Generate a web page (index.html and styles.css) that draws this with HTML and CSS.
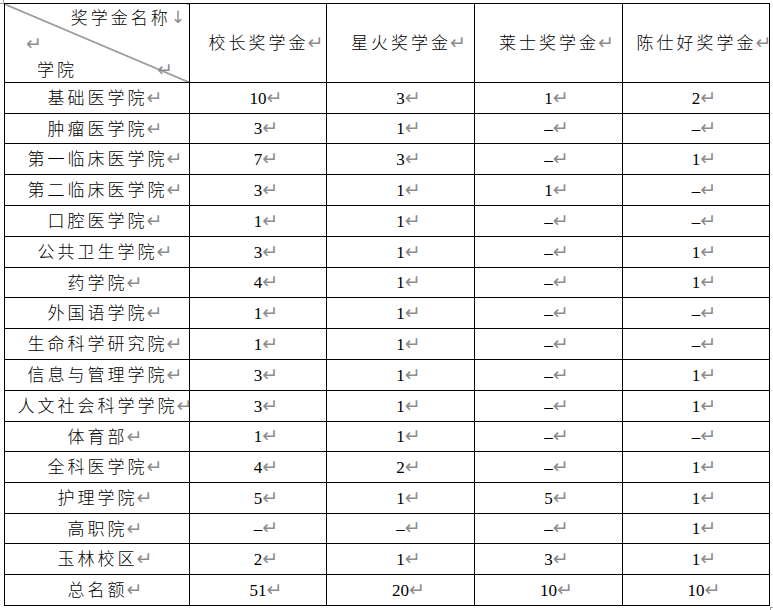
FILE: index.html
```html
<!DOCTYPE html>
<html lang="zh">
<head>
<meta charset="utf-8">
<title>奖学金名额分配表</title>
<link rel="stylesheet" href="styles.css">
</head>
<body>
<div class="page">
<span class="crop crop-tl"></span>
<table class="grid">
<colgroup>
<col class="c0"><col class="c1"><col class="c2"><col class="c3"><col class="c4">
</colgroup>
<thead>
<tr class="hd">
<th class="diag">
<div class="dline l1"><span class="zh">奖学金名称</span><span class="pm-down">↓</span></div>
<div class="dline l2"><span class="pm">↵</span></div>
<div class="dline l3"><span class="zh">学院</span><span class="pm pm-far">↵</span></div>
</th>
<th><span class="zh">校长奖学金</span><span class="pm">↵</span></th>
<th><span class="zh">星火奖学金</span><span class="pm">↵</span></th>
<th><span class="zh">莱士奖学金</span><span class="pm">↵</span></th>
<th><span class="zh">陈仕好奖学金</span><span class="pm">↵</span></th>
</tr>
</thead>
<tbody>
<tr class="r31"><td><span class="zh">基础医学院</span><span class="pm">↵</span></td><td>10<span class="pm">↵</span></td><td>3<span class="pm">↵</span></td><td>1<span class="pm">↵</span></td><td>2<span class="pm">↵</span></td></tr>
<tr class="r30"><td><span class="zh">肿瘤医学院</span><span class="pm">↵</span></td><td>3<span class="pm">↵</span></td><td>1<span class="pm">↵</span></td><td>–<span class="pm">↵</span></td><td>–<span class="pm">↵</span></td></tr>
<tr class="r31"><td><span class="zh">第一临床医学院</span><span class="pm">↵</span></td><td>7<span class="pm">↵</span></td><td>3<span class="pm">↵</span></td><td>–<span class="pm">↵</span></td><td>1<span class="pm">↵</span></td></tr>
<tr class="r31"><td><span class="zh">第二临床医学院</span><span class="pm">↵</span></td><td>3<span class="pm">↵</span></td><td>1<span class="pm">↵</span></td><td>1<span class="pm">↵</span></td><td>–<span class="pm">↵</span></td></tr>
<tr class="r31"><td><span class="zh">口腔医学院</span><span class="pm">↵</span></td><td>1<span class="pm">↵</span></td><td>1<span class="pm">↵</span></td><td>–<span class="pm">↵</span></td><td>–<span class="pm">↵</span></td></tr>
<tr class="r31"><td><span class="zh">公共卫生学院</span><span class="pm">↵</span></td><td>3<span class="pm">↵</span></td><td>1<span class="pm">↵</span></td><td>–<span class="pm">↵</span></td><td>1<span class="pm">↵</span></td></tr>
<tr class="r30"><td><span class="zh">药学院</span><span class="pm">↵</span></td><td>4<span class="pm">↵</span></td><td>1<span class="pm">↵</span></td><td>–<span class="pm">↵</span></td><td>1<span class="pm">↵</span></td></tr>
<tr class="r31"><td><span class="zh">外国语学院</span><span class="pm">↵</span></td><td>1<span class="pm">↵</span></td><td>1<span class="pm">↵</span></td><td>–<span class="pm">↵</span></td><td>–<span class="pm">↵</span></td></tr>
<tr class="r31"><td><span class="zh">生命科学研究院</span><span class="pm">↵</span></td><td>1<span class="pm">↵</span></td><td>1<span class="pm">↵</span></td><td>–<span class="pm">↵</span></td><td>–<span class="pm">↵</span></td></tr>
<tr class="r31"><td><span class="zh">信息与管理学院</span><span class="pm">↵</span></td><td>3<span class="pm">↵</span></td><td>1<span class="pm">↵</span></td><td>–<span class="pm">↵</span></td><td>1<span class="pm">↵</span></td></tr>
<tr class="r31"><td><span class="zh">人文社会科学学院</span><span class="pm">↵</span></td><td>3<span class="pm">↵</span></td><td>1<span class="pm">↵</span></td><td>–<span class="pm">↵</span></td><td>1<span class="pm">↵</span></td></tr>
<tr class="r30"><td><span class="zh">体育部</span><span class="pm">↵</span></td><td>1<span class="pm">↵</span></td><td>1<span class="pm">↵</span></td><td>–<span class="pm">↵</span></td><td>–<span class="pm">↵</span></td></tr>
<tr class="r31"><td><span class="zh">全科医学院</span><span class="pm">↵</span></td><td>4<span class="pm">↵</span></td><td>2<span class="pm">↵</span></td><td>–<span class="pm">↵</span></td><td>1<span class="pm">↵</span></td></tr>
<tr class="r31"><td><span class="zh">护理学院</span><span class="pm">↵</span></td><td>5<span class="pm">↵</span></td><td>1<span class="pm">↵</span></td><td>5<span class="pm">↵</span></td><td>1<span class="pm">↵</span></td></tr>
<tr class="r30"><td><span class="zh">高职院</span><span class="pm">↵</span></td><td>–<span class="pm">↵</span></td><td>–<span class="pm">↵</span></td><td>–<span class="pm">↵</span></td><td>1<span class="pm">↵</span></td></tr>
<tr class="r31"><td><span class="zh">玉林校区</span><span class="pm">↵</span></td><td>2<span class="pm">↵</span></td><td>1<span class="pm">↵</span></td><td>3<span class="pm">↵</span></td><td>1<span class="pm">↵</span></td></tr>
<tr class="r31"><td><span class="zh">总名额</span><span class="pm">↵</span></td><td>51<span class="pm">↵</span></td><td>20<span class="pm">↵</span></td><td>10<span class="pm">↵</span></td><td>10<span class="pm">↵</span></td></tr>
</tbody>
</table>
<span class="crop crop-br"></span>
</div>
</body>
</html>
```

FILE: styles.css
```css
html, body {
  margin: 0;
  padding: 0;
  background: #ffffff;
}

.page {
  position: relative;
  width: 773px;
  height: 610px;
  padding: 3px 0 0 4px;
  box-sizing: border-box;
}

.crop {
  position: absolute;
  width: 3px;
  height: 3px;
  border-color: #a0a0a0;
  border-style: solid;
  border-width: 0;
}
.crop-tl {
  left: 0;
  top: 0;
  border-right-width: 1px;
  border-bottom-width: 1px;
}
.crop-br {
  left: 770px;
  top: 607px;
  border-left-width: 1px;
  border-top-width: 1px;
}

.grid {
  border-collapse: collapse;
  table-layout: fixed;
  width: 765px;
  font-family: "Liberation Serif", "Noto Sans CJK SC", serif;
  font-size: 17px;
  color: #000;
}

.c0 { width: 185px; }
.c1 { width: 137px; }
.c2 { width: 148px; }
.c3 { width: 148px; }
.c4 { width: 147px; }

.grid th,
.grid td {
  border: 1px solid #000;
  padding: 0;
  text-align: center;
  vertical-align: middle;
  white-space: nowrap;
  font-weight: normal;
  line-height: 20px;
}

.hd th { height: 78px; }
.r31 td { height: 30px; }
.r30 td { height: 29px; }

.zh {
  font-family: "Noto Sans CJK SC", sans-serif;
  font-size: 17px;
  font-weight: 300;
  letter-spacing: 3px;
}

/* paragraph mark: hangs to the right, not counted in centering */
.pm {
  display: inline-block;
  width: 0;
  font-family: "DejaVu Sans", sans-serif;
  font-size: 19px;
  line-height: 1;
  color: #8c8c8c;
}
.zh + .pm {
  margin-left: -1px;
}

.pm-down {
  font-family: "DejaVu Sans", sans-serif;
  font-size: 17px;
  line-height: 1;
  color: #8c8c8c;
}

.diag {
  position: relative;
  background: linear-gradient(to top right,
    transparent calc(50% - 0.8px),
    #222 50%,
    transparent calc(50% + 0.8px));
}

.diag .dline {
  display: flex;
  height: 26px;
  align-items: center;
}
.diag .l1 {
  justify-content: flex-end;
  padding-right: 4px;
}
.diag .l2 {
  padding-left: 21px;
}
.diag .l3 {
  padding-left: 32px;
}
.diag .l3 .pm-far {
  margin-left: 80px;
}
```
